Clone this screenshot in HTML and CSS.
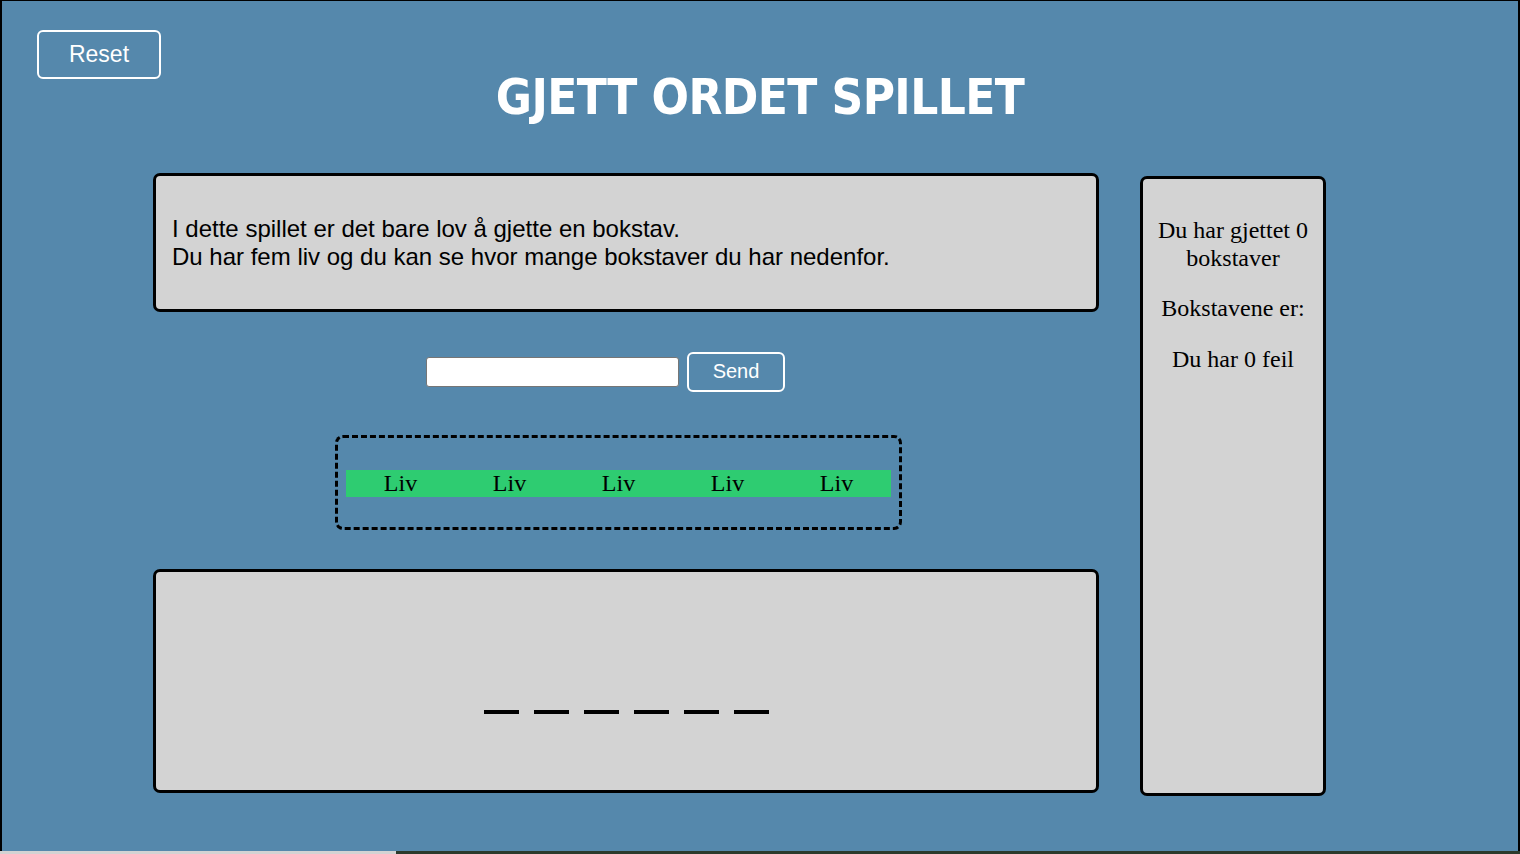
FILE: index.html
```html
<!DOCTYPE html>
<html lang="no">
<head>
<meta charset="utf-8">
<title>Gjett ordet spillet</title>
<link rel="stylesheet" href="styles.css">
</head>
<body>
<div class="page">
  <header class="header">
    <button class="btn reset-btn">Reset</button>
    <h1 class="title">GJETT ORDET SPILLET</h1>
  </header>
  <main class="main">
    <section class="left">
      <div class="card info">
        <p class="info-text">I dette spillet er det bare lov å gjette en bokstav.<br>Du har fem liv og du kan se hvor mange bokstaver du har nedenfor.</p>
      </div>
      <div class="guess-row">
        <input class="guess-input" type="text">
        <button class="btn send-btn">Send</button>
      </div>
      <div class="lives">
        <div class="lives-bar">
          <span class="life">Liv</span>
          <span class="life">Liv</span>
          <span class="life">Liv</span>
          <span class="life">Liv</span>
          <span class="life">Liv</span>
        </div>
      </div>
      <div class="card word">
        <span class="slot"></span>
        <span class="slot"></span>
        <span class="slot"></span>
        <span class="slot"></span>
        <span class="slot"></span>
        <span class="slot"></span>
      </div>
    </section>
    <aside class="card side">
      <p class="side-text first">Du har gjettet 0 bokstaver</p>
      <p class="side-text second">Bokstavene er:</p>
      <p class="side-text third">Du har 0 feil</p>
    </aside>
  </main>
</div>
<div class="scrollstrip"><div class="scrollstrip-thumb"></div></div>
</body>
</html>
```
FILE: styles.css
```css
html, body {
  margin: 0;
  padding: 0;
}
body {
  background: #2c3a2c;
  overflow: hidden;
  width: 1520px;
  height: 854px;
}
.page {
  box-sizing: border-box;
  width: 1520px;
  height: 851px;
  background: #5588ac;
  border-left: 2px solid #000;
  border-top: 1px solid #000;
  border-right: 2px solid #000;
  overflow: hidden;
}
.header {
  display: flex;
  flex-direction: column;
}
.btn {
  box-sizing: border-box;
  background: transparent;
  color: #fff;
  border: 2px solid #fff;
  border-radius: 6px;
  font-family: "Liberation Sans", Arial, sans-serif;
  padding: 0;
  cursor: pointer;
}
.reset-btn {
  margin: 29px 0 0 35px;
  width: 124px;
  height: 49px;
  font-size: 23px;
  align-self: flex-start;
}
.title {
  margin: -10px 0 0;
  text-align: center;
  color: #fff;
  font-family: "DejaVu Sans Condensed", "DejaVu Sans", sans-serif;
  font-stretch: condensed;
  font-weight: bold;
  font-size: 49px;
  line-height: 58px;
  letter-spacing: -0.6px;
}
.main {
  display: flex;
  align-items: flex-start;
  gap: 41px;
  margin: 46px 0 0 151px;
}
.left {
  width: 946px;
  display: flex;
  flex-direction: column;
}
.card {
  box-sizing: border-box;
  background: #d3d3d3;
  border: 3px solid #000;
  border-radius: 7px;
}
.info {
  height: 139px;
  padding: 39px 14px 0 16px;
}
.info-text {
  margin: 0;
  font-family: "Liberation Sans", Arial, sans-serif;
  font-size: 24px;
  color: #000;
}
.guess-row {
  display: flex;
  align-items: center;
  gap: 8px;
  margin: 40px 0 0 273px;
  height: 39px;
}
.guess-input {
  box-sizing: border-box;
  width: 253px;
  height: 30px;
  margin: 0;
  border: 1px solid #767676;
  border-radius: 3px;
  background: #fff;
}
.send-btn {
  width: 98px;
  height: 40px;
  font-size: 20px;
}
.lives {
  box-sizing: border-box;
  width: 567px;
  height: 95px;
  margin: 44px 0 0 182px;
  border: 3px dashed #000;
  border-radius: 8px;
  padding: 32px 8px 0;
}
.lives-bar {
  display: flex;
  background: #2ecc71;
}
.life {
  flex: 1;
  text-align: center;
  font-family: "Liberation Serif", "Times New Roman", serif;
  font-size: 24px;
  color: #000;
}
.word {
  margin-top: 39px;
  height: 224px;
  display: flex;
  justify-content: center;
  align-items: flex-end;
  gap: 15px;
  padding: 0 0 76px 0;
}
.slot {
  display: block;
  width: 35px;
  height: 4px;
  background: #000;
}
.side {
  width: 186px;
  height: 620px;
  margin-top: 3px;
  padding: 13px 10px 0;
  text-align: center;
}
.side-text {
  margin: 0;
  font-family: "Liberation Serif", "Times New Roman", serif;
  font-size: 24px;
  line-height: 28px;
  color: #000;
}
.side-text.first {
  margin-top: 24px;
}
.side-text.second {
  margin-top: 22px;
}
.side-text.third {
  margin-top: 23px;
}
.scrollstrip {
  height: 3px;
  background: #2c3a2c;
}
.scrollstrip-thumb {
  width: 396px;
  height: 3px;
  background: #d3d3d3;
}
```
